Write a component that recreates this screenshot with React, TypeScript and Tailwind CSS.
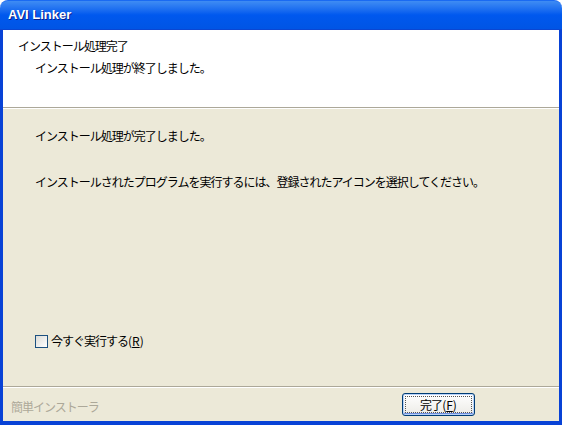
import React from 'react';

const jp = { fontFamily: '"Noto Sans CJK JP", "Noto Sans", sans-serif' };

export default function App() {
  return (
    <div className="w-[562px] h-[425px] bg-white flex flex-col overflow-hidden text-[12px] leading-[16px] tracking-[-1px] text-black" style={jp}>
      {/* title bar */}
      <div className="h-[30px] shrink-0 rounded-t-[8px] bg-gradient-to-b from-[#3F8CF3] via-[#0058EE] to-[#0055E5] flex items-center pl-[8px] border-t border-[#1A6AF2] border-b border-b-[#0A46D2]">
        <span
          className="text-white font-bold text-[13px] tracking-[0px] [text-shadow:1px_1px_0_#0A1E8C]"
          style={{ fontFamily: '"Liberation Sans", Arial, sans-serif' }}
        >
          AVI Linker
        </span>
      </div>

      {/* window frame */}
      <div className="flex-1 flex flex-col border-l-[3px] border-r-[3px] border-b-[4px] border-[#0842D6] bg-[#ECE9D8]">
        {/* header */}
        <div className="h-[78px] shrink-0 bg-white pt-[8px] pl-[15px] border-b border-[#ACA899]">
          <div>インストール処理完了</div>
          <div className="pl-[17px] mt-[6px]">インストール処理が終了しました。</div>
        </div>
        <div className="h-px bg-white shrink-0" />

        {/* body */}
        <div className="flex-1 flex flex-col pl-[32px] pt-[19px] pb-[37px]">
          <div>インストール処理が完了しました。</div>
          <div className="mt-[30px]">インストールされたプログラムを実行するには、登録されたアイコンを選択してください。</div>
          <div className="mt-auto flex items-center gap-[3px]">
            <span className="w-[13px] h-[13px] border border-[#1C5180] bg-gradient-to-br from-[#DCDCD7] to-white" />
            <span>
              今すぐ実行する<span className="tracking-[0px]">(<span className="underline">R</span>)</span>
            </span>
          </div>
        </div>

        {/* footer */}
        <div className="h-px bg-[#ACA899] shrink-0" />
        <div className="h-px bg-white shrink-0" />
        <div className="h-[33px] shrink-0 flex items-start justify-between pl-[8px] pr-[84px] pt-[5px]">
          <span className="text-[#ACA899] mt-[6px]">簡単インストーラ</span>
          <button className="w-[73px] h-[23px] rounded-[3px] border border-[#003C74] bg-gradient-to-b from-white to-[#ECEBE6] shadow-[inset_0_0_0_1px_#B8D2F8,inset_0_-1px_0_1px_#6E8FE0] flex items-center justify-center p-[2px]">
            <span className="w-full h-full border border-dotted border-[#555] flex items-center justify-center">
              完了<span className="tracking-[0px]">(<span className="underline">F</span>)</span>
            </span>
          </button>
        </div>
      </div>
    </div>
  );
}
